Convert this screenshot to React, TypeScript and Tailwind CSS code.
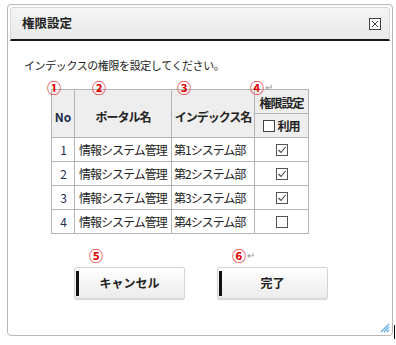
import React from "react";

const rows = [
  { no: 1, portal: "情報システム管理", index: "第1システム部", checked: true },
  { no: 2, portal: "情報システム管理", index: "第2システム部", checked: true },
  { no: 3, portal: "情報システム管理", index: "第3システム部", checked: true },
  { no: 4, portal: "情報システム管理", index: "第4システム部", checked: false },
];

function CheckBox({ checked }: { checked: boolean }) {
  return (
    <svg width="12" height="12" viewBox="0 0 12 12" className="inline-block">
      <rect x="0.5" y="0.5" width="11" height="11" fill="white" stroke="#555" />
      {checked && <path d="M2.5 6 L5 8.5 L9.5 3" fill="none" stroke="#444" strokeWidth="1.1" />}
    </svg>
  );
}

function Mark({ n, ret }: { n: string; ret?: boolean }) {
  return (
    <span className="absolute flex items-center text-[14px] font-bold leading-none text-[#e00000]">
      {n}
      {ret && <span className="ml-[1px] text-[10px] font-normal text-[#999]">↵</span>}
    </span>
  );
}

function Button({ label }: { label: string }) {
  return (
    <button className="relative flex h-[32px] w-[111px] items-center justify-center rounded-[2px] border border-[#d4d4d4] bg-gradient-to-b from-white to-[#ececec] text-[12px] font-bold text-[#222] shadow-[0_1px_1px_rgba(0,0,0,0.15)]">
      <span className="absolute left-[1px] top-[3px] h-[25px] w-[3px] bg-[#111]" />
      {label}
    </button>
  );
}

export default function App() {
  const font = { fontFamily: '"Noto Sans CJK JP", "Liberation Sans", sans-serif' };
  return (
    <div className="h-[345px] w-[396px] bg-white pl-[7px] pt-[4px]" style={font}>
      <div className="relative h-[332px] w-[386px] rounded-[4px] border border-[#b8b8b8] p-[2px]">
        <div className="flex h-[34px] items-center justify-between rounded-t-[3px] border border-b-2 border-[#d8d8d8] border-b-[#1a1a1a] bg-gradient-to-b from-[#f6f6f6] to-[#e9e9e9] pl-[11px] pr-[8px]">
          <span className="text-[12.5px] font-bold text-[#222]">権限設定</span>
          <svg width="12" height="12" viewBox="0 0 12 12">
            <rect x="0.5" y="0.5" width="11" height="11" fill="white" stroke="#444" />
            <path d="M3 3 L9 9 M9 3 L3 9" stroke="#444" strokeWidth="1" />
          </svg>
        </div>

        <p className="ml-[14px] mt-[17px] text-[11px] leading-[14px] tracking-[-0.4px] text-[#222]">
          インデックスの権限を設定してください。
        </p>

        <div className="relative ml-[41px] mt-[17px]">
          <table className="border-collapse text-[12px] tracking-[-1px] text-[#222]">
            <thead>
              <tr className="h-[24px]">
                <th rowSpan={2} className="w-[23px] border border-[#b4b4b4] bg-[#eeeeee] pt-[6px] font-bold tracking-normal text-[#1f2d4d]">No</th>
                <th rowSpan={2} className="w-[97px] border border-[#b4b4b4] bg-[#eeeeee] pt-[6px] font-bold">ポータル名</th>
                <th rowSpan={2} className="w-[83px] whitespace-nowrap border border-[#b4b4b4] bg-[#eeeeee] pt-[6px] font-bold">インデックス名</th>
                <th className="w-[54px] whitespace-nowrap border border-[#b4b4b4] bg-[#eeeeee] pt-[2px] font-bold">権限設定</th>
              </tr>
              <tr className="h-[24px]">
                <th className="border border-[#b4b4b4] bg-[#eeeeee] font-bold">
                  <span className="flex items-center justify-center gap-[2px]">
                    <span className="inline-block h-[12px] w-[12px] border border-[#444] bg-white" />
                    利用
                  </span>
                </th>
              </tr>
            </thead>
            <tbody>
              {rows.map((r) => (
                <tr key={r.no} className="h-[24px]">
                  <td className="border border-[#b4b4b4] text-center text-[#1f2d4d]">{r.no}</td>
                  <td className="whitespace-nowrap border border-[#b4b4b4] pl-[4px]">{r.portal}</td>
                  <td className="whitespace-nowrap border border-[#b4b4b4] pl-[2px]">{r.index}</td>
                  <td className="border border-[#b4b4b4] text-center">
                    <span className="flex items-center justify-center">
                      <CheckBox checked={r.checked} />
                    </span>
                  </td>
                </tr>
              ))}
            </tbody>
          </table>
          <div className="absolute left-[-4px] top-[-9px]"><Mark n="①" /></div>
          <div className="absolute left-[41px] top-[-9px]"><Mark n="②" /></div>
          <div className="absolute left-[126px] top-[-9px]"><Mark n="③" /></div>
          <div className="absolute left-[199px] top-[-9px]"><Mark n="④" ret /></div>
        </div>

        <div className="relative ml-[64px] mt-[33px] flex gap-[32px]">
          <Button label="キャンセル" />
          <Button label="完了" />
          <div className="absolute left-[15px] top-[-19px]"><Mark n="⑤" /></div>
          <div className="absolute left-[158px] top-[-19px]"><Mark n="⑥" ret /></div>
        </div>

        <svg className="absolute bottom-[2px] right-[2px]" width="10" height="10" viewBox="0 0 10 10">
          <path d="M9 1 L1 9 M9 4 L4 9 M9 7 L7 9" stroke="#5aa9e6" strokeWidth="1.2" />
        </svg>
      </div>
      <div className="absolute left-[394px] top-[325px] h-[14px] w-[1px] bg-black" />
    </div>
  );
}
